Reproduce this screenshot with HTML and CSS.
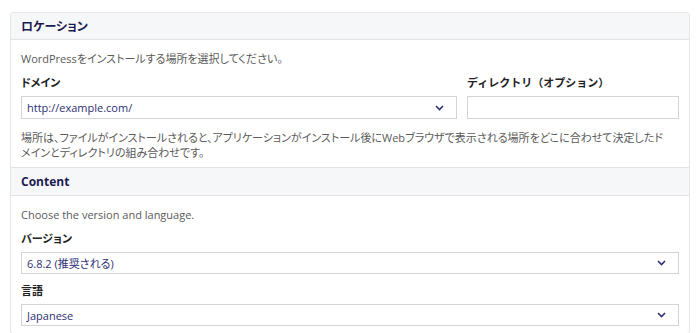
FILE: index.html
```html
<!DOCTYPE html>
<html lang="ja">
<head>
<meta charset="utf-8">
<link rel="stylesheet" href="styles.css">
</head>
<body>
<div class="card">
  <div class="card-head"><h2 class="card-title">ロケーション</h2></div>
  <div class="card-body">
    <p class="desc">WordPressをインストールする場所を選択してください。</p>
    <div class="row">
      <div class="field">
        <label class="label">ドメイン</label>
        <div class="select"><span class="value">http://example.com/</span><svg class="chev" width="9" height="6" viewBox="0 0 9 6"><path d="M1 1l3.5 3.5L8 1" fill="none" stroke="currentColor" stroke-width="1.6"/></svg></div>
      </div>
      <div class="field">
        <label class="label full">ディレクトリ（オプション）</label>
        <div class="input"></div>
      </div>
    </div>
    <p class="help">場所は、ファイルがインストールされると、アプリケーションがインストール後にWebブラウザで表示される場所をどこに合わせて決定したドメインとディレクトリの組み合わせです。</p>
  </div>
  <div class="card-head sep"><h2 class="card-title">Content</h2></div>
  <div class="card-body">
    <p class="desc">Choose the version and language.</p>
    <div class="field first">
      <label class="label">バージョン</label>
      <div class="select"><span class="value">6.8.2 (推奨される)</span><svg class="chev" width="9" height="6" viewBox="0 0 9 6"><path d="M1 1l3.5 3.5L8 1" fill="none" stroke="currentColor" stroke-width="1.6"/></svg></div>
    </div>
    <div class="field gap">
      <label class="label">言語</label>
      <div class="select"><span class="value">Japanese</span><svg class="chev" width="9" height="6" viewBox="0 0 9 6"><path d="M1 1l3.5 3.5L8 1" fill="none" stroke="currentColor" stroke-width="1.6"/></svg></div>
    </div>
  </div>
</div>
</body>
</html>
```
FILE: styles.css
```css
* { box-sizing: border-box; }
html, body { margin: 0; padding: 0; background: #fff; }
body {
  padding: 12px 10px 0 10px;
  font-family: "Open Sans", "Noto Sans CJK JP", sans-serif;
  font-feature-settings: "palt" 1;
  font-size: 11px;
  color: #333;
  overflow: hidden;
  height: 333px;
}
.full { font-feature-settings: normal; }
.card {
  border: 1px solid #e6e6e8;
  border-radius: 3px;
  background: #fff;
}
.card-head {
  background: #f6f7f9;
  height: 27px;
  border-bottom: 1px solid #e3e3e6;
  display: flex;
  align-items: center;
  padding: 0 10px;
  border-radius: 3px 3px 0 0;
}
.card-head.sep {
  border-top: 1px solid #e3e3e6;
  border-radius: 0;
  height: 29px;
}
.card-title {
  margin: 0;
  font-size: 12px;
  font-weight: 700;
  color: #1c1c50;
}
.card-body {
  padding: 11px 10px 7px 10px;
}
.desc {
  margin: 0;
  line-height: 16px;
  color: #5a5a5a;
}
.row {
  display: grid;
  grid-template-columns: 1fr 212px;
  column-gap: 10px;
  margin-top: 7px;
}
.field { display: flex; flex-direction: column; }
.label {
  font-weight: 700;
  color: #222;
  line-height: 18px;
  margin-bottom: 4px;
}
.field.first { margin-top: 7px; }
.field.gap { margin-top: 8px; }
.select, .input {
  height: 23px;
  border: 1px solid #d4d4d6;
  background: #fff;
  display: flex;
  align-items: center;
  justify-content: space-between;
  padding: 0 12px 0 5px;
}
.field.first .select, .field.gap .select { height: 22px; }
.value {
  color: #2e2f74;
}
.chev { color: #2e2f74; display: block; }
.help {
  margin: 11px 14px 0 0;
  line-height: 15px;
  color: #5a5a5a;
}
```
